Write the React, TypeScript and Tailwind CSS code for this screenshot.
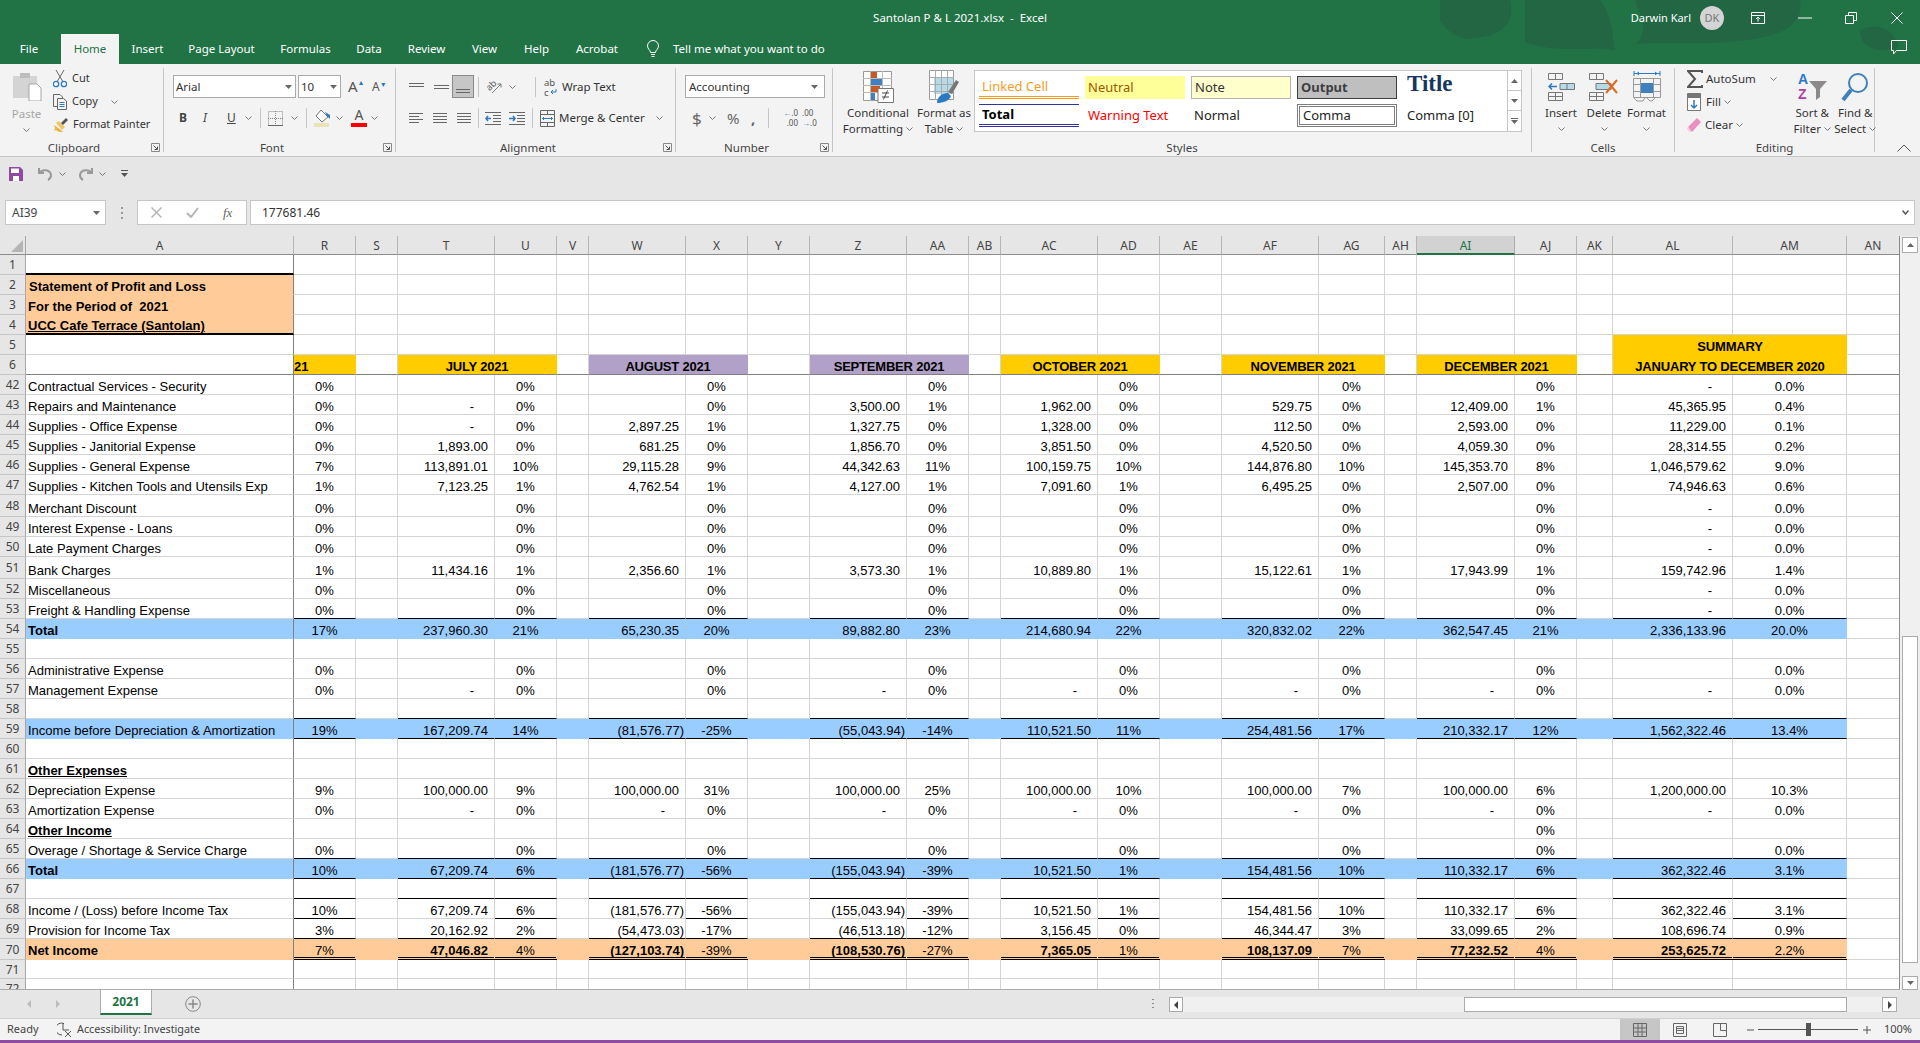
import React from "react";

type Line = "none" | "all" | "pct" | "double";
type Row = {
  n: number;
  label?: string;
  r?: string;
  pairs?: string[][];
  fill?: "blue" | "peach";
  line?: Line;
  boldLabel?: boolean;
  underline?: boolean;
  boldNum?: boolean;
};

const cols = ["A", "R", "S", "T", "U", "V", "W", "X", "Y", "Z", "AA", "AB", "AC", "AD", "AE", "AF", "AG", "AH", "AI", "AJ", "AK", "AL", "AM", "AN"];
const gapCols = ["S", "V", "Y", "AB", "AE", "AH", "AK"];
const valueCols = ["T", "U", "W", "X", "Z", "AA", "AC", "AD", "AF", "AG", "AI", "AJ", "AL", "AM"];
const pctCols = ["R", "U", "X", "AA", "AD", "AG", "AJ", "AM"];

const zero = [["", "0%"], ["", "0%"], ["", "0%"], ["", "0%"], ["", "0%"], ["", "0%"]];
const dashes = (last: string) => [["-", "0%"], ["-", "0%"], ["-", "0%"], ["-", "0%"], ["-", "0%"], ["-", "0%"], ["-", last]];

const rows: Row[] = [
  { n: 42, label: "Contractual Services - Security", r: "0%", pairs: [...zero, ["-", "0.0%"]] },
  { n: 43, label: "Repairs and Maintenance", r: "0%", pairs: [["-", "0%"], ["", "0%"], ["3,500.00", "1%"], ["1,962.00", "0%"], ["529.75", "0%"], ["12,409.00", "1%"], ["45,365.95", "0.4%"]] },
  { n: 44, label: "Supplies - Office Expense", r: "0%", pairs: [["-", "0%"], ["2,897.25", "1%"], ["1,327.75", "0%"], ["1,328.00", "0%"], ["112.50", "0%"], ["2,593.00", "0%"], ["11,229.00", "0.1%"]] },
  { n: 45, label: "Supplies - Janitorial Expense", r: "0%", pairs: [["1,893.00", "0%"], ["681.25", "0%"], ["1,856.70", "0%"], ["3,851.50", "0%"], ["4,520.50", "0%"], ["4,059.30", "0%"], ["28,314.55", "0.2%"]] },
  { n: 46, label: "Supplies - General Expense", r: "7%", pairs: [["113,891.01", "10%"], ["29,115.28", "9%"], ["44,342.63", "11%"], ["100,159.75", "10%"], ["144,876.80", "10%"], ["145,353.70", "8%"], ["1,046,579.62", "9.0%"]] },
  { n: 47, label: "Supplies - Kitchen Tools and Utensils Exp", r: "1%", pairs: [["7,123.25", "1%"], ["4,762.54", "1%"], ["4,127.00", "1%"], ["7,091.60", "1%"], ["6,495.25", "0%"], ["2,507.00", "0%"], ["74,946.63", "0.6%"]] },
  { n: 48, label: "Merchant Discount", r: "0%", pairs: [...zero, ["-", "0.0%"]] },
  { n: 49, label: "Interest Expense - Loans", r: "0%", pairs: [...zero, ["-", "0.0%"]] },
  { n: 50, label: "Late Payment Charges", r: "0%", pairs: [...zero, ["-", "0.0%"]] },
  { n: 51, label: "Bank Charges", r: "1%", pairs: [["11,434.16", "1%"], ["2,356.60", "1%"], ["3,573.30", "1%"], ["10,889.80", "1%"], ["15,122.61", "1%"], ["17,943.99", "1%"], ["159,742.96", "1.4%"]] },
  { n: 52, label: "Miscellaneous", r: "0%", pairs: [...zero, ["-", "0.0%"]] },
  { n: 53, label: "Freight & Handling Expense", r: "0%", pairs: [...zero, ["-", "0.0%"]], line: "all" },
  { n: 54, label: "Total", boldLabel: true, fill: "blue", r: "17%", pairs: [["237,960.30", "21%"], ["65,230.35", "20%"], ["89,882.80", "23%"], ["214,680.94", "22%"], ["320,832.02", "22%"], ["362,547.45", "21%"], ["2,336,133.96", "20.0%"]] },
  { n: 55 },
  { n: 56, label: "Administrative Expense", r: "0%", pairs: [...zero, ["", "0.0%"]] },
  { n: 57, label: "Management Expense", r: "0%", pairs: [["-", "0%"], ["", "0%"], ["-", "0%"], ["-", "0%"], ["-", "0%"], ["-", "0%"], ["-", "0.0%"]] },
  { n: 58, line: "all" },
  { n: 59, label: "Income before Depreciation & Amortization", fill: "blue", line: "all", r: "19%", pairs: [["167,209.74", "14%"], ["(81,576.77)", "-25%"], ["(55,043.94)", "-14%"], ["110,521.50", "11%"], ["254,481.56", "17%"], ["210,332.17", "12%"], ["1,562,322.46", "13.4%"]] },
  { n: 60 },
  { n: 61, label: "Other Expenses", boldLabel: true, underline: true },
  { n: 62, label: "Depreciation Expense", r: "9%", pairs: [["100,000.00", "9%"], ["100,000.00", "31%"], ["100,000.00", "25%"], ["100,000.00", "10%"], ["100,000.00", "7%"], ["100,000.00", "6%"], ["1,200,000.00", "10.3%"]] },
  { n: 63, label: "Amortization Expense", r: "0%", pairs: dashes("0.0%") },
  { n: 64, label: "Other Income", boldLabel: true, underline: true, pairs: [["", ""], ["", ""], ["", ""], ["", ""], ["", ""], ["", "0%"], ["", ""]] },
  { n: 65, label: "Overage / Shortage & Service Charge", r: "0%", pairs: [...zero, ["", "0.0%"]], line: "all" },
  { n: 66, label: "Total", boldLabel: true, fill: "blue", line: "all", r: "10%", pairs: [["67,209.74", "6%"], ["(181,576.77)", "-56%"], ["(155,043.94)", "-39%"], ["10,521.50", "1%"], ["154,481.56", "10%"], ["110,332.17", "6%"], ["362,322.46", "3.1%"]] },
  { n: 67, line: "all" },
  { n: 68, label: "Income / (Loss) before Income Tax", line: "pct", r: "10%", pairs: [["67,209.74", "6%"], ["(181,576.77)", "-56%"], ["(155,043.94)", "-39%"], ["10,521.50", "1%"], ["154,481.56", "10%"], ["110,332.17", "6%"], ["362,322.46", "3.1%"]] },
  { n: 69, label: "Provision for Income Tax", line: "all", r: "3%", pairs: [["20,162.92", "2%"], ["(54,473.03)", "-17%"], ["(46,513.18)", "-12%"], ["3,156.45", "0%"], ["46,344.47", "3%"], ["33,099.65", "2%"], ["108,696.74", "0.9%"]] },
  { n: 70, label: "Net Income", boldLabel: true, boldNum: true, fill: "peach", line: "double", r: "7%", pairs: [["47,046.82", "4%"], ["(127,103.74)", "-39%"], ["(108,530.76)", "-27%"], ["7,365.05", "1%"], ["108,137.09", "7%"], ["77,232.52", "4%"], ["253,625.72", "2.2%"]] },
  { n: 71 },
  { n: 72 },
];

const cellBase = "flex items-end min-w-0 overflow-hidden whitespace-nowrap border-b border-r leading-[15px] text-[13px] text-black";

function RowHead({ n }: { n: number }) {
  return (
    <div className="flex items-center justify-center border-r border-b border-r-[#a6a6a6] border-b-[#c6c6c6] bg-[#e6e6e6] pt-[1px] font-['Noto_Sans',sans-serif] text-[12px] leading-none text-[#444]">
      {n}
    </div>
  );
}

function valueCell(row: Row, col: string) {
  if (col === "R") return row.r ?? "";
  const i = valueCols.indexOf(col);
  if (i < 0 || !row.pairs) return "";
  return row.pairs[Math.floor(i / 2)][i % 2];
}

function DataRow({ row }: { row: Row }) {
  const fillClass = row.fill === "blue" ? "bg-[#99ccff]" : row.fill === "peach" ? "bg-[#ffcc99]" : "";
  return (
    <>
      <RowHead n={row.n} />
      {cols.map((col) => {
        const filled = row.fill && col !== "AN";
        const rightLine = col === "A" ? "border-r-[#808080]" : filled ? "border-r-transparent" : "border-r-[#d4d4d4]";
        if (col === "A") {
          return (
            <div key={col} className={`${cellBase} ${rightLine} pl-[2px] ${filled ? "border-b-transparent" : "border-b-[#d4d4d4]"} ${filled ? fillClass : ""} ${row.boldLabel ? "font-bold" : ""} ${row.underline ? "underline" : ""} ${row.line === "double" ? "pb-[1px]" : ""}`}>
              {row.label}
            </div>
          );
        }
        const isPct = pctCols.includes(col);
        const isGap = gapCols.includes(col) || col === "AN";
        const ruled = !isGap && (row.line === "all" || row.line === "double" || (row.line === "pct" && isPct));
        const bottom = ruled
          ? row.line === "double"
            ? "border-b-[3px] border-double border-b-black"
            : "border-b-black"
          : filled
            ? "border-b-transparent"
            : "border-b-[#d4d4d4]";
        const val = valueCell(row, col);
        const align = isPct
          ? "justify-center"
          : val === "-"
            ? "justify-end pr-[20px]"
            : val.startsWith("(")
              ? "justify-end pr-[1px]"
              : "justify-end pr-[6px]";
        return (
          <div key={col} className={`${cellBase} ${rightLine} ${bottom} ${align} ${filled ? fillClass : ""} ${row.boldNum && !isPct ? "font-bold" : ""}`}>
            <span className={row.line === "double" ? "relative top-[1px]" : ""}>{val}</span>
          </div>
        );
      })}
    </>
  );
}

const plain = `${cellBase} border-r-[#d4d4d4] border-b-[#d4d4d4]`;
const underHeader = `${cellBase} border-r-[#d4d4d4] border-b-[#808080]`;

function TitleRow({ n, text, className }: { n: number; text: string; className: string }) {
  return (
    <>
      <RowHead n={n} />
      <div className={`${cellBase} border-r-[#808080] bg-[#ffcc99] font-bold ${className}`}>{text}</div>
      {cols.slice(1).map((c) => (
        <div key={c} className={plain} />
      ))}
    </>
  );
}

function MonthHead({ text, purple }: { text: string; purple?: boolean }) {
  return (
    <div className={`${cellBase} col-span-2 justify-center border-r-transparent border-b-[#808080] font-bold tracking-[-0.2px] ${purple ? "bg-[#b1a0c7]" : "bg-[#ffcc00]"}`}>
      {text}
    </div>
  );
}

function SheetGrid() {
  return (
    <div className="grid h-[754px] w-[1900px] grid-cols-[26px_268px_62px_42px_97px_62px_32px_97px_62px_62px_97px_62px_32px_97px_62px_62px_97px_66px_32px_98px_62px_36px_120px_114px_53px] grid-rows-[19px_repeat(12,20px)_22px_20px_20px_22px_20px_20px_repeat(14,20px)_20px_20px_21px_19px_20px] overflow-hidden border-r border-b border-r-[#8c8c8c] border-b-[#ababab] bg-white font-['Liberation_Sans',Arial,sans-serif]">
      {/* column headers */}
      <div className="relative border-r border-b border-r-[#a6a6a6] border-b-[#8c8c8c] bg-[#e6e6e6]">
        <svg className="absolute right-[2px] bottom-[2px]" width="12" height="12" viewBox="0 0 12 12"><path d="M12 0V12H0Z" fill="#b5b5b5" /></svg>
      </div>
      {cols.map((c) => (
        <div key={c} className={`flex items-center justify-center border-r font-['Noto_Sans',sans-serif] text-[12px] leading-none ${c === "AI" ? "border-b-2 border-r-[#ababab] border-b-[#217346] bg-[#d2d2d2] pt-[2px] text-[#217346]" : "border-b border-r-[#b5b5b5] border-b-[#8c8c8c] bg-[#e6e6e6] pt-[1px] text-[#444]"}`}>
          {c}
        </div>
      ))}

      {/* row 1 */}
      <RowHead n={1} />
      <div className={`${cellBase} border-b-2 border-r-[#808080] border-b-black`} />
      {cols.slice(1).map((c) => (
        <div key={c} className={plain} />
      ))}

      <TitleRow n={2} text="Statement of Profit and Loss" className="border-b-transparent pl-[3px]" />
      <TitleRow n={3} text="For the Period of  2021" className="border-b-transparent whitespace-pre pl-[2px]" />
      <TitleRow n={4} text="UCC Cafe Terrace (Santolan)" className="border-b-2 border-b-black pl-[2px] underline" />

      {/* row 5 */}
      <RowHead n={5} />
      <div className={`${cellBase} border-r-[#808080] border-b-[#d4d4d4]`} />
      {cols.slice(1, 21).map((c) => (
        <div key={c} className={plain} />
      ))}
      <div className="col-span-2 row-span-2 flex flex-col items-center border-b border-b-[#808080] bg-[#ffcc00] pt-[2px] text-[13px] leading-[20px] font-bold tracking-[-0.2px] text-black">
        <span>SUMMARY</span>
        <span>JANUARY TO DECEMBER 2020</span>
      </div>
      <div className={plain} />

      {/* row 6 */}
      <RowHead n={6} />
      <div className={`${cellBase} border-r-[#808080] border-b-[#808080]`} />
      <div className={`${cellBase} border-r-transparent border-b-[#808080] bg-[#ffcc00] font-bold`}>21</div>
      <div className={underHeader} />
      <MonthHead text="JULY 2021" />
      <div className={underHeader} />
      <MonthHead text="AUGUST 2021" purple />
      <div className={underHeader} />
      <MonthHead text="SEPTEMBER 2021" purple />
      <div className={underHeader} />
      <MonthHead text="OCTOBER 2021" />
      <div className={underHeader} />
      <MonthHead text="NOVEMBER 2021" />
      <div className={underHeader} />
      <MonthHead text="DECEMBER 2021" />
      <div className={underHeader} />
      <div className={underHeader} />

      {rows.map((row) => (
        <DataRow key={row.n} row={row} />
      ))}
    </div>
  );
}

function Chev({ className = "" }: { className?: string }) {
  return (
    <svg className={className} width="7" height="4" viewBox="0 0 7 4" fill="none"><path d="M0.5 0.5L3.5 3.5L6.5 0.5" stroke="#777" /></svg>
  );
}

function Tri({ className = "" }: { className?: string }) {
  return (
    <svg className={className} width="7" height="4" viewBox="0 0 7 4"><path d="M0 0H7L3.5 4Z" fill="#666" /></svg>
  );
}

function Sep({ className = "" }: { className?: string }) {
  return <div className={`w-px bg-[#c6c6c6] ${className}`} />;
}

function Group({ label, width, launcher, children }: { label: string; width: string; launcher?: boolean; children: React.ReactNode }) {
  return (
    <div className={`relative my-[4px] flex h-[84px] flex-col border-r border-r-[#c6c6c6] ${width}`}>
      <div className="flex h-[72px] shrink-0">{children}</div>
      <div className={`flex h-[16px] shrink-0 items-center justify-center text-[11.5px] leading-none text-[#444] ${launcher ? "pr-[15px]" : ""}`}>{label}</div>
      {launcher && (
        <svg className="absolute right-[3px] bottom-0" width="9" height="9" viewBox="0 0 9 9" fill="none">
          <path d="M0.5 8.5V0.5H8.5V8.5H0.5" stroke="#888" />
          <path d="M2.5 2.5L6.5 6.5M6.5 3.5V6.5H3.5" stroke="#555" />
        </svg>
      )}
    </div>
  );
}

function BigButton({ icon, lines, width }: { icon: React.ReactNode; lines: React.ReactNode[]; width: string }) {
  return (
    <div className={`flex flex-col items-center text-[11.5px] leading-[16px] text-[#333] ${width}`}>
      <div className="flex h-[37px] items-center justify-center">{icon}</div>
      {lines.map((l, i) => (
        <div key={i} className="flex h-[16px] items-center gap-[3px] whitespace-nowrap">{l}</div>
      ))}
    </div>
  );
}

const lineIcon = (ys: [number, number][], stroke = "#666") => (
  <svg width="15" height="14" viewBox="0 0 15 14" fill="none">
    {ys.map(([y, w], i) => (
      <path key={i} d={`M0 ${y + 0.5}H${w}`} stroke={stroke} />
    ))}
  </svg>
);

function RibbonTabs() {
  const tabs = [
    { t: "File", w: "w-[58px] mr-[3px]" },
    { t: "Home", w: "w-[58px] bg-[#f3f3f3] text-[#217346]" },
    { t: "Insert", w: "w-[57px]" },
    { t: "Page Layout", w: "w-[91px]" },
    { t: "Formulas", w: "w-[77px]" },
    { t: "Data", w: "w-[50px]" },
    { t: "Review", w: "w-[65px]" },
    { t: "View", w: "w-[51px]" },
    { t: "Help", w: "w-[53px]" },
    { t: "Acrobat", w: "w-[68px]" },
  ];
  return (
    <div className="relative flex h-[30px] items-stretch text-[11.5px] text-white">
      {tabs.map((tab) => (
        <div key={tab.t} className={`flex items-center justify-center ${tab.w}`}>{tab.t}</div>
      ))}
      <div className="ml-[15px] flex items-center gap-[13px]">
        <svg width="14" height="18" viewBox="0 0 14 18" fill="none" stroke="#fff">
          <path d="M4.5 12.5C4.5 10 1.5 9 1.5 6A5.5 5.5 0 0 1 12.5 6C12.5 9 9.5 10 9.5 12.5Z" />
          <path d="M5 14.5H9M5.5 16.5H8.5" />
        </svg>
        <span>Tell me what you want to do</span>
      </div>
      <svg className="absolute right-[12px] top-[5px]" width="18" height="17" viewBox="0 0 18 17" fill="none" stroke="#fff">
        <path d="M1.5 1.5H16.5V11.5H6.5L3.5 15V11.5H1.5Z" />
      </svg>
    </div>
  );
}

function TitleBar() {
  return (
    <div className="grid h-[34px] grid-cols-[1fr_auto_1fr] items-center pt-[2px] text-[11.5px] text-white">
      <div />
      <div className="whitespace-pre">Santolan P &amp; L 2021.xlsx  -  Excel</div>
      <div className="flex items-center justify-end">
        <span className="mr-[9px] text-[11px]">Darwin Karl</span>
        <div className="mr-[27px] flex h-[24px] w-[24px] items-center justify-center rounded-full bg-[#d4d4d4] text-[11px] text-[#777]">DK</div>
        <svg className="mr-[33px]" width="14" height="12" viewBox="0 0 14 12" fill="none" stroke="#fff">
          <path d="M0.5 0.5H13.5V11.5H0.5ZM0.5 3.5H13.5M7 9.5V5M5 7L7 5L9 7" />
        </svg>
        <svg className="mr-[33px]" width="14" height="2" viewBox="0 0 14 2"><path d="M0 1H14" stroke="#fff" /></svg>
        <svg className="mr-[34px]" width="12" height="12" viewBox="0 0 12 12" fill="none" stroke="#fff">
          <path d="M0.5 3.5H8.5V11.5H0.5ZM3.5 3V0.5H11.5V8.5H9" />
        </svg>
        <svg className="mr-[17px]" width="12" height="12" viewBox="0 0 12 12" fill="none" stroke="#fff"><path d="M0.5 0.5L11.5 11.5M11.5 0.5L0.5 11.5" /></svg>
      </div>
    </div>
  );
}

function ClipboardGroup() {
  return (
    <Group label="Clipboard" width="w-[164px]" launcher>
      <div className="flex w-[53px] flex-col items-center pt-[3px] text-[11.5px] text-[#a6a6a6]">
        <svg width="30" height="30" viewBox="0 0 30 30">
          <path d="M1 5H25V27H1Z" fill="#d4d4d4" />
          <path d="M8 2H18V7H8Z" fill="#bdbdbd" />
          <path d="M17 13H25L29 17V30H17Z" fill="#fff" stroke="#a6a6a6" />
        </svg>
        <span className="mt-[5px] leading-[16px]">Paste</span>
        <Chev className="mt-[6px]" />
      </div>
      <div className="flex flex-col text-[11px] text-[#333]">
        <div className="-mt-[1px] flex h-[23px] items-center gap-[5px]">
          <svg width="14" height="18" viewBox="0 0 14 18" fill="none">
            <path d="M3 0L9.5 11M11 0L4.5 11" stroke="#666" />
            <circle cx="3" cy="14" r="2.7" stroke="#2b79c2" strokeWidth="1.3" />
            <circle cx="11" cy="14" r="2.7" stroke="#2b79c2" strokeWidth="1.3" />
          </svg>
          <span>Cut</span>
        </div>
        <div className="flex h-[23px] items-center gap-[5px]">
          <svg width="14" height="16" viewBox="0 0 14 16" fill="none" stroke="#666">
            <path d="M0.5 0.5H7L9.5 3V12.5H0.5Z" />
            <path d="M4.5 4.5H10.5L13.5 7V15.5H4.5Z" fill="#f3f3f3" />
            <path d="M6.5 8.5H11.5M6.5 10.5H11.5M6.5 12.5H11.5" stroke="#2b79c2" />
          </svg>
          <span>Copy</span>
          <Chev className="ml-[8px]" />
        </div>
        <div className="flex h-[23px] items-center gap-[4px]">
          <svg width="16" height="16" viewBox="0 0 16 16">
            <path d="M1 8L8 13L10 15H6L3 13L1 14L2 11Z" fill="#e9b44c" />
            <path d="M3 6L6 4L12 10L9 13Z" fill="#f0c469" />
            <path d="M8 6L13 1L15 3L10 8Z" fill="#555" />
          </svg>
          <span>Format Painter</span>
        </div>
      </div>
    </Group>
  );
}

function FontGroup() {
  return (
    <Group label="Font" width="w-[232px]" launcher>
      <div className="flex flex-col pl-[9px]">
        <div className="mt-[7px] flex h-[23px] items-center">
          <div className="flex h-[23px] w-[123px] items-center justify-between border border-[#ababab] bg-white pr-[3px] pl-[2px] text-[11.5px] text-[#333]">Arial<Tri /></div>
          <div className="ml-[2px] flex h-[23px] w-[43px] items-center justify-between border border-[#ababab] bg-white pr-[3px] pl-[2px] text-[11.5px] text-[#333]">10<Tri /></div>
          <div className="ml-[7px] flex w-[20px] items-start text-[15px] leading-none text-[#555]">A<span className="text-[7px] text-[#2b79c2]">▲</span></div>
          <div className="ml-[4px] flex w-[18px] items-start text-[12px] leading-none text-[#555]">A<span className="text-[7px] text-[#2b79c2]">▼</span></div>
        </div>
        <div className="mt-[8px] flex h-[24px] items-center text-[12px] text-[#444]">
          <span className="ml-[6px] w-[24px] font-bold">B</span>
          <span className="w-[24px] italic">I</span>
          <span className="w-[14px] underline">U</span>
          <Chev className="ml-[4px]" />
          <Sep className="ml-[8px] h-[20px]" />
          <svg className="ml-[7px]" width="15" height="15" viewBox="0 0 15 15" fill="none" stroke="#888" strokeDasharray="1 1">
            <path d="M0.5 0.5H14.5V14.5H0.5ZM7.5 0V15M0 7.5H15" />
            <path d="M0 14.5H15" stroke="#666" strokeDasharray="none" />
          </svg>
          <Chev className="ml-[8px]" />
          <Sep className="ml-[8px] h-[20px]" />
          <svg className="ml-[7px]" width="17" height="18" viewBox="0 0 17 18">
            <path d="M7 1L14 8L8 13L2 7Z" fill="#fff" stroke="#777" />
            <path d="M11 3L16 6V10L13 7Z" fill="#2b79c2" />
            <path d="M0 14H15V18H0Z" fill="#e8e4b8" />
          </svg>
          <Chev className="ml-[5px]" />
          <div className="ml-[8px] flex w-[16px] flex-col items-center text-[14px] leading-[12px] text-[#555]">
            A
            <div className="mt-[2px] h-[4px] w-[16px] bg-[#ff0000]" />
          </div>
          <Chev className="ml-[4px]" />
        </div>
      </div>
    </Group>
  );
}

function AlignmentGroup() {
  return (
    <Group label="Alignment" width="w-[280px]" launcher>
      <div className="flex flex-col pl-[13px]">
        <div className="mt-[7px] flex h-[23px] items-center">
          <div className="w-[24px]">{lineIcon([[3, 15], [6, 15]])}</div>
          <div className="w-[19px] pl-[1px]">{lineIcon([[5, 15], [8, 15]])}</div>
          <div className="flex h-[23px] w-[22px] items-end justify-center border border-[#8a8a8a] bg-[#c6c6c6] pb-[3px]">
            <svg width="14" height="6" viewBox="0 0 14 6"><path d="M0 1.5H14M0 4.5H14" stroke="#666" /></svg>
          </div>
          <Sep className="ml-[4px] h-[20px]" />
          <svg className="ml-[7px] overflow-visible" width="17" height="17" viewBox="0 0 17 17" fill="none">
            <text x="1" y="11" transform="rotate(-45 5 9)" fontFamily="'Noto Sans',sans-serif" fontSize="9" fill="#555">ab</text>
            <path d="M6 15L15 6M15 6H11.5M15 6V9.5" stroke="#777" />
          </svg>
          <Chev className="ml-[6px]" />
          <Sep className="ml-[19px] h-[20px]" />
          <div className="ml-[8px] flex items-center gap-[4px] text-[11.5px] text-[#333]">
            <svg className="overflow-visible" width="14" height="18" viewBox="0 0 14 18" fill="none">
              <text x="0" y="8" fontFamily="'Noto Sans',sans-serif" fontSize="9.5" fill="#555">ab</text>
              <text x="0" y="18" fontFamily="'Noto Sans',sans-serif" fontSize="9.5" fill="#555">c</text>
              <path d="M12 11V14H7M9 12L7 14L9 16" stroke="#2b79c2" />
            </svg>
            <span>Wrap Text</span>
          </div>
        </div>
        <div className="mt-[8px] flex h-[24px] items-center">
          <div className="w-[24px]">{lineIcon([[2, 14], [5, 10], [8, 14], [11, 10]])}</div>
          <div className="w-[24px]">{lineIcon([[2, 14], [5, 14], [8, 14], [11, 14]])}</div>
          <div className="w-[17px]">{lineIcon([[2, 14], [5, 14], [8, 14], [11, 14]])}</div>
          <Sep className="ml-[4px] h-[20px]" />
          <div className="ml-[6px] w-[24px]">
            <svg width="16" height="14" viewBox="0 0 16 14" fill="none">
              <path d="M0 1.5H16M8 4.5H16M8 7.5H16M8 10.5H16M0 13.5H16" stroke="#666" />
              <path d="M6 7.5H1M3 5L1 7.5L3 10" stroke="#2b79c2" strokeWidth="1.5" />
            </svg>
          </div>
          <div className="w-[17px]">
            <svg width="16" height="14" viewBox="0 0 16 14" fill="none">
              <path d="M0 1.5H16M8 4.5H16M8 7.5H16M8 10.5H16M0 13.5H16" stroke="#666" />
              <path d="M0 7.5H6M4 5L6 7.5L4 10" stroke="#2b79c2" strokeWidth="1.5" />
            </svg>
          </div>
          <Sep className="ml-[6px] h-[20px]" />
          <div className="ml-[7px] flex items-center gap-[4px] text-[11.5px] text-[#333]">
            <svg width="15" height="17" viewBox="0 0 15 17" fill="none" stroke="#666">
              <path d="M0.5 0.5H14.5V16.5H0.5ZM0.5 4.5H14.5M0.5 12.5H14.5M7.5 0.5V4.5M7.5 12.5V16.5" />
              <path d="M2.5 8.5H12.5M4 7L2.5 8.5L4 10M11 7L12.5 8.5L11 10" stroke="#2b79c2" />
            </svg>
            <span>Merge &amp; Center</span>
            <Chev className="ml-[7px]" />
          </div>
        </div>
      </div>
    </Group>
  );
}

function NumberGroup() {
  return (
    <Group label="Number" width="w-[157px]" launcher>
      <div className="flex flex-col pl-[9px]">
        <div className="mt-[7px] flex h-[23px] w-[140px] items-center justify-between border border-[#ababab] bg-white pr-[6px] pl-[3px] text-[11.5px] text-[#333]">Accounting<Tri /></div>
        <div className="mt-[8px] flex h-[24px] items-center text-[#666]">
          <span className="ml-[7px] w-[14px] text-[17px] leading-none">$</span>
          <Chev className="ml-[3px]" />
          <span className="ml-[11px] w-[18px] text-[15px] leading-none">%</span>
          <span className="ml-[6px] w-[10px] text-[15px] leading-none font-bold">,</span>
          <Sep className="ml-[7px] h-[20px]" />
          <div className="ml-[7px] w-[22px] text-right text-[8px] leading-[10px] text-[#555]"><span className="text-[#2b79c2]">←</span>.0<br />.00</div>
          <div className="ml-[4px] w-[16px] text-[8px] leading-[10px] text-[#555]">.00<br /><span className="text-[#2b79c2]">→</span>.0</div>
        </div>
      </div>
    </Group>
  );
}

function StyleCell({ className, children }: { className: string; children: React.ReactNode }) {
  return <div className={`flex h-[23px] w-[100px] shrink-0 items-center px-[3px] text-[13px] ${className}`}>{children}</div>;
}

function StylesGroup() {
  return (
    <Group label="Styles" width="w-[699px]">
      <div className="flex pl-[7px]">
        <BigButton
          width="w-[76px]"
          icon={
            <svg width="31" height="32" viewBox="0 0 31 32">
              <path d="M0.5 0.5H28.5V29.5H0.5Z" fill="#fff" stroke="#999" />
              <path d="M7.5 0V30M19.5 0V30M0 7.5H29M0 14.5H29M0 21.5H29" stroke="#bbb" />
              <path d="M8 1H14V7H8Z" fill="#c55a23" />
              <path d="M8 8H19V14H8Z" fill="#3f80c0" />
              <path d="M8 15H17V21H8Z" fill="#c55a23" />
              <path d="M8 22H12V29H8Z" fill="#3f80c0" />
              <path d="M15 17.5H30.5V31.5H15Z" fill="#fff" stroke="#777" />
              <path d="M19 22H26M19 26H26M24.5 19.5L20.5 28.5" stroke="#444" />
            </svg>
          }
          lines={["Conditional", <>Formatting <Chev /></>]}
        />
        <BigButton
          width="w-[56px]"
          icon={
            <svg width="31" height="33" viewBox="0 0 31 33">
              <path d="M0.5 0.5H24.5V29.5H0.5Z" fill="#fff" stroke="#999" />
              <path d="M5 8H24V24H5Z" fill="#b6dbe8" />
              <path d="M6.5 0V30M12.5 0V30M18.5 0V30M0 7.5H25M0 14.5H25M0 21.5H25" stroke="#aaa" />
              <path d="M19 22L27 10L30 12L23 24Z" fill="#777" />
              <path d="M8 33C8 27 13 23 19 23L22 26C20 31 14 33 8 33Z" fill="#2b79c2" />
            </svg>
          }
          lines={["Format as", <>Table <Chev /></>]}
        />
        <div className="mt-[2px] ml-[2px] flex h-[62px] w-[548px] border border-[#c6c6c6] bg-white">
          <div className="flex flex-1 flex-col gap-[5px] pt-[5px] pl-[4px]">
            <div className="flex h-[23px] gap-[6px]">
              <StyleCell className="border-b-[3px] border-double border-b-[#f79b1f] pt-[2px] text-[#f79b1f]">Linked Cell</StyleCell>
              <StyleCell className="bg-[#ffff99] text-[#9c5700]">Neutral</StyleCell>
              <StyleCell className="border border-[#b2b2b2] bg-[#ffffcc] text-[#333]">Note</StyleCell>
              <StyleCell className="border border-[#3f3f3f] bg-[#bfbfbf] font-bold text-[#3f3f3f]">Output</StyleCell>
              <div className="-mt-[6px] pl-[4px] font-['Liberation_Serif',serif] text-[23px] leading-[28px] font-bold text-[#17365d]">Title</div>
            </div>
            <div className="flex h-[23px] gap-[6px]">
              <StyleCell className="border-t border-b-[3px] border-t-[#333399] border-b-[#333399] [border-bottom-style:double] font-bold text-black">Total</StyleCell>
              <StyleCell className="text-[#ff0000]">Warning Text</StyleCell>
              <StyleCell className="text-[#222]">Normal</StyleCell>
              <StyleCell className="border-[3px] border-double border-[#7f7f7f] text-[#222]">Comma</StyleCell>
              <div className="flex items-center pl-[4px] text-[13px] text-[#222]">Comma [0]</div>
            </div>
          </div>
          <div className="flex w-[14px] flex-col border-l border-l-[#c6c6c6]">
            <div className="flex h-[20px] items-center justify-center border-b border-b-[#c6c6c6]"><Tri className="rotate-180" /></div>
            <div className="flex h-[20px] items-center justify-center border-b border-b-[#c6c6c6]"><Tri /></div>
            <div className="flex flex-1 flex-col items-center justify-center gap-[1px]"><div className="h-px w-[7px] bg-[#666]" /><Tri /></div>
          </div>
        </div>
      </div>
    </Group>
  );
}

function CellsGroup() {
  return (
    <Group label="Cells" width="w-[143px]">
      <div className="flex pl-[7px]">
        <BigButton
          width="w-[44px]"
          icon={
            <svg width="27" height="28" viewBox="0 0 27 28" fill="none" stroke="#777">
              <path d="M0.5 0.5H14.5V6.5H0.5ZM7.5 0.5V6.5" />
              <path d="M12 10.5H26.5V16.5H12ZM19 10.5V16.5" fill="#b6dbe8" />
              <path d="M9 13.5H1M4 10.5L1 13.5L4 16.5" stroke="#2b79c2" strokeWidth="1.5" />
              <path d="M0.5 19.5H14.5V27.5H0.5ZM7.5 19.5V27.5M0.5 23.5H14.5" />
            </svg>
          }
          lines={["Insert", <Chev />]}
        />
        <BigButton
          width="w-[42px]"
          icon={
            <svg width="30" height="28" viewBox="0 0 30 28" fill="none" stroke="#777">
              <path d="M0.5 0.5H14.5V6.5H0.5ZM7.5 0.5V6.5" />
              <path d="M7 10.5H22V16.5H7Z" fill="#b6dbe8" />
              <path d="M17 7L28 20M28 7L17 20" stroke="#dd6b20" strokeWidth="2" />
              <path d="M0.5 19.5H14.5V27.5H0.5ZM7.5 19.5V27.5M0.5 23.5H14.5" />
            </svg>
          }
          lines={["Delete", <Chev />]}
        />
        <BigButton
          width="w-[43px]"
          icon={
            <svg width="28" height="31" viewBox="0 0 28 31" fill="none" stroke="#999">
              <path d="M1 2.5H27M1 0V5M27 0V5M4 2.5L6 1M4 2.5L6 4M24 2.5L22 1M24 2.5L22 4" stroke="#2b79c2" />
              <path d="M0.5 7.5H27.5V26.5H0.5ZM7.5 7.5V26.5M20.5 7.5V26.5M0.5 13.5H27.5M0.5 20.5H27.5" />
              <path d="M8 12H20V22H8Z" fill="#3f80c0" stroke="none" />
              <path d="M1 27L4 30H10L12 27M14 27L17 30H19L22 27" />
            </svg>
          }
          lines={["Format", <Chev />]}
        />
      </div>
    </Group>
  );
}

function EditingGroup() {
  return (
    <Group label="Editing" width="w-[200px]">
      <div className="flex flex-col pl-[12px] text-[11.5px] text-[#333]">
        <div className="-mt-[1px] flex h-[23px] items-center gap-[3px]">
          <svg width="16" height="18" viewBox="0 0 16 18" fill="none"><path d="M15 3V1H1L8 9L1 17H15V15" stroke="#555" strokeWidth="2" /></svg>
          AutoSum
          <Chev className="ml-[11px]" />
        </div>
        <div className="flex h-[23px] items-center gap-[3px]">
          <svg className="mr-[2px]" width="14" height="18" viewBox="0 0 14 18" fill="none">
            <path d="M0.5 0.5H13.5V17.5H0.5Z" stroke="#777" fill="#fff" />
            <path d="M1 1H13V5H1Z" fill="#777" />
            <path d="M7 7V15M4 12L7 15L10 12" stroke="#2b79c2" strokeWidth="1.5" />
          </svg>
          Fill
          <Chev />
        </div>
        <div className="flex h-[23px] items-center gap-[3px]">
          <svg width="15" height="16" viewBox="0 0 15 16"><path d="M1 10L10 1L14 5L5 15Z" fill="#ec8fc0" /><path d="M1 10L5 15L3 15L0 12Z" fill="#f5c8df" /></svg>
          Clear
          <Chev />
        </div>
      </div>
      <div className="ml-[14px] flex">
        <BigButton
          width="w-[43px]"
          icon={
            <svg width="30" height="29" viewBox="0 0 30 29">
              <text x="1" y="12" fontFamily="'Liberation Sans',sans-serif" fontSize="14" fontWeight="700" fill="#2b79c2">A</text>
              <text x="1" y="27" fontFamily="'Liberation Sans',sans-serif" fontSize="14" fontWeight="700" fill="#a9459e">Z</text>
              <path d="M12 9H30L23 17V25L19 28V17Z" fill="#8a8a8a" />
            </svg>
          }
          lines={["Sort &", <>Filter <Chev /></>]}
        />
        <BigButton
          width="w-[43px]"
          icon={
            <svg width="28" height="30" viewBox="0 0 28 30" fill="none" stroke="#3f80c0">
              <circle cx="17" cy="11" r="9" strokeWidth="2" />
              <path d="M10 18L2 28" strokeWidth="4" />
            </svg>
          }
          lines={["Find &", <>Select <Chev /></>]}
        />
      </div>
    </Group>
  );
}

function Ribbon() {
  return (
    <div className="relative flex h-[93px] border-b border-b-[#c6c6c6] bg-[#f3f3f3]">
      <ClipboardGroup />
      <FontGroup />
      <AlignmentGroup />
      <NumberGroup />
      <StylesGroup />
      <CellsGroup />
      <EditingGroup />
      <svg className="absolute right-[9px] bottom-[4px]" width="14" height="8" viewBox="0 0 14 8" fill="none"><path d="M0.5 7.5L7 1L13.5 7.5" stroke="#555" /></svg>
    </div>
  );
}

function QuickAccess() {
  return (
    <div className="flex h-[43px] items-center bg-[#e6e6e6] pb-[9px] pl-[9px]">
      <svg width="14" height="14" viewBox="0 0 14 14">
        <path d="M0 0H11L14 3V14H0Z" fill="#8e4ba1" />
        <path d="M2 1.5H10V6H2Z" fill="#fff" />
        <path d="M4 9H10V14H4Z" fill="#fff" />
      </svg>
      <svg className="ml-[15px]" width="15" height="14" viewBox="0 0 15 14" fill="none" stroke="#999" strokeWidth="2">
        <path d="M1 1V6H6M1.5 6C4 2 12 2 13 8C13 10 12 12 10 13" />
      </svg>
      <Chev className="ml-[6px]" />
      <svg className="ml-[12px]" width="15" height="14" viewBox="0 0 15 14" fill="none" stroke="#999" strokeWidth="2">
        <path d="M14 1V6H9M13.5 6C11 2 3 2 2 8C2 10 3 12 5 13" />
      </svg>
      <Chev className="ml-[6px]" />
      <svg className="ml-[15px]" width="7" height="8" viewBox="0 0 7 8"><path d="M0 0.5H7" stroke="#555" /><path d="M0 3H7L3.5 7Z" fill="#555" /></svg>
    </div>
  );
}

function FormulaBar() {
  return (
    <div className="flex h-[25px] bg-[#e6e6e6] pl-[5px] text-[12px] text-[#444]">
      <div className="flex w-[101px] items-center justify-between border border-[#c6c6c6] bg-white pr-[5px] pl-[6px]">AI39<Tri /></div>
      <div className="flex w-[31px] flex-col items-center justify-center gap-[3px]">
        <div className="h-[2px] w-[2px] bg-[#999]" />
        <div className="h-[2px] w-[2px] bg-[#999]" />
        <div className="h-[2px] w-[2px] bg-[#999]" />
      </div>
      <div className="flex w-[110px] items-center border border-[#c6c6c6] bg-white text-[#aaa]">
        <svg className="ml-[13px]" width="11" height="11" viewBox="0 0 11 11" fill="none" stroke="#b5b5b5" strokeWidth="1.5"><path d="M0.5 0.5L10.5 10.5M10.5 0.5L0.5 10.5" /></svg>
        <svg className="ml-[24px]" width="13" height="11" viewBox="0 0 13 11" fill="none" stroke="#b5b5b5" strokeWidth="2"><path d="M1 6L5 10L12 1" /></svg>
        <span className="ml-[24px] font-['Liberation_Serif',serif] text-[13px] text-[#666] italic">fx</span>
      </div>
      <div className="ml-[3px] flex w-[1665px] items-center justify-between border border-[#c6c6c6] bg-white pr-[5px] pl-[11px] text-[#333]">
        177681.46
        <svg width="7" height="5" viewBox="0 0 7 5" fill="none"><path d="M0.5 0.5L3.5 4L6.5 0.5" stroke="#555" strokeWidth="1.5" /></svg>
      </div>
    </div>
  );
}

function ScrollBtn({ children, className }: { children: React.ReactNode; className?: string }) {
  return <div className={`flex items-center justify-center border border-[#ababab] bg-white ${className ?? ""}`}>{children}</div>;
}

function VerticalScroll() {
  return (
    <div className="flex h-[754px] w-[20px] flex-col bg-[#f0f0f0] pt-px pl-[2px]">
      <ScrollBtn className="h-[16px] w-[16px]"><Tri className="rotate-180" /></ScrollBtn>
      <div className="h-[383px]" />
      <div className="h-[327px] w-[16px] border border-[#ababab] bg-white" />
      <div className="h-[13px]" />
      <ScrollBtn className="h-[14px] w-[16px]"><Tri /></ScrollBtn>
    </div>
  );
}

function SheetTabs() {
  return (
    <div className="flex h-[28px] bg-[#e6e6e6] font-['Noto_Sans',sans-serif]">
      <div className="flex w-[100px] items-center">
        <svg className="ml-[27px]" width="4" height="8" viewBox="0 0 4 8"><path d="M4 0V8L0 4Z" fill="#bbb" /></svg>
        <svg className="ml-[25px]" width="4" height="8" viewBox="0 0 4 8"><path d="M0 0V8L4 4Z" fill="#bbb" /></svg>
      </div>
      <div className="flex h-[25px] w-[52px] items-center justify-center border-x border-b-2 border-x-[#ababab] border-b-[#217346] bg-white pt-[1px] text-[12px] font-bold text-[#217346]">2021</div>
      <svg className="mt-[6px] ml-[33px]" width="16" height="16" viewBox="0 0 16 16" fill="none" stroke="#888">
        <circle cx="8" cy="8" r="7.3" />
        <path d="M8 3.5V12.5M3.5 8H12.5" strokeWidth="1.5" />
      </svg>
      <div className="mt-[9px] ml-[951px] flex h-[9px] w-[3px] flex-col justify-between">
        <div className="h-[1px] w-[2px] bg-[#888]" />
        <div className="h-[1px] w-[2px] bg-[#888]" />
        <div className="h-[1px] w-[2px] bg-[#888]" />
      </div>
      <div className="mt-[7px] ml-[14px] flex h-[15px] w-[728px] bg-[#f0f0f0]">
        <ScrollBtn className="h-[15px] w-[14px]"><svg width="4" height="8" viewBox="0 0 4 8"><path d="M4 0V8L0 4Z" fill="#444" /></svg></ScrollBtn>
        <div className="w-[281px]" />
        <div className="h-[15px] w-[383px] border border-[#ababab] bg-white" />
        <div className="w-[35px]" />
        <ScrollBtn className="h-[15px] w-[15px]"><svg width="4" height="8" viewBox="0 0 4 8"><path d="M0 0V8L4 4Z" fill="#444" /></svg></ScrollBtn>
      </div>
    </div>
  );
}

function StatusBar() {
  return (
    <div className="flex h-[22px] items-center border-t border-t-[#d0d0d0] bg-[#f3f3f3] text-[11px] text-[#444]">
      <span className="ml-[7px] w-[50px]">Ready</span>
      <svg width="17" height="16" viewBox="0 0 17 16" fill="none" stroke="#555">
        <path d="M7 1.5A6 6 0 1 0 5 13" />
        <path d="M6 1V8H12M8 9L14 15M14 9L8 15" />
      </svg>
      <span className="ml-[3px] text-[10.8px]">Accessibility: Investigate</span>
      <div className="ml-auto flex h-full items-center">
        <div className="flex h-full w-[40px] items-center justify-center bg-[#c6c6c6]">
          <svg width="14" height="14" viewBox="0 0 14 14" fill="none" stroke="#666"><path d="M0.5 0.5H13.5V13.5H0.5ZM5 0.5V13.5M9 0.5V13.5M0.5 5H13.5M0.5 9H13.5" /></svg>
        </div>
        <svg className="ml-[13px]" width="14" height="14" viewBox="0 0 14 14" fill="none" stroke="#666"><path d="M0.5 0.5H13.5V13.5H0.5ZM3.5 3.5H10.5V10.5H3.5ZM3.5 5.5H10.5M3.5 7.5H10.5" /></svg>
        <svg className="ml-[26px]" width="14" height="14" viewBox="0 0 14 14" fill="none" stroke="#666"><path d="M0.5 0.5H13.5V13.5H0.5ZM7.5 0.5V7.5H13.5" /></svg>
        <svg className="ml-[20px]" width="7" height="2" viewBox="0 0 7 2"><path d="M0 1H7" stroke="#555" /></svg>
        <div className="relative ml-[4px] h-px w-[100px] bg-[#555]">
          <div className="absolute top-[-6px] left-[48px] h-[13px] w-[5px] bg-[#555]" />
        </div>
        <svg className="ml-[5px]" width="8" height="8" viewBox="0 0 8 8"><path d="M0 4H8M4 0V8" stroke="#555" /></svg>
        <span className="mr-[8px] ml-[13px]">100%</span>
      </div>
    </div>
  );
}

export default function App() {
  return (
    <div className="h-[1043px] w-[1920px] overflow-hidden bg-[#e6e6e6] font-['Noto_Sans',sans-serif]">
      <div className="relative bg-[#217346]">
        <svg className="pointer-events-none absolute inset-0" width="1920" height="64" viewBox="0 0 1920 64" fill="#226644">
          <path d="M1440 0H1510C1515 20 1505 36 1475 38C1460 42 1445 30 1440 20Z" />
          <path d="M1525 0H1600C1615 20 1612 40 1615 50C1590 46 1555 54 1525 42Z" />
          <path d="M1635 0H1800C1805 25 1780 34 1760 38C1720 46 1670 42 1636 44C1650 30 1640 15 1635 0Z" />
          <path d="M1860 30C1870 24 1885 26 1892 34C1900 46 1905 50 1880 50C1865 48 1860 40 1860 30Z" />
        </svg>
        <div className="relative">
          <TitleBar />
          <RibbonTabs />
        </div>
      </div>
      <Ribbon />
      <QuickAccess />
      <FormulaBar />
      <div className="h-[11px]" />
      <div className="flex">
        <SheetGrid />
        <VerticalScroll />
      </div>
      <SheetTabs />
      <StatusBar />
      <div className="h-[3px] bg-[#8e4ba1]" />
    </div>
  );
}
